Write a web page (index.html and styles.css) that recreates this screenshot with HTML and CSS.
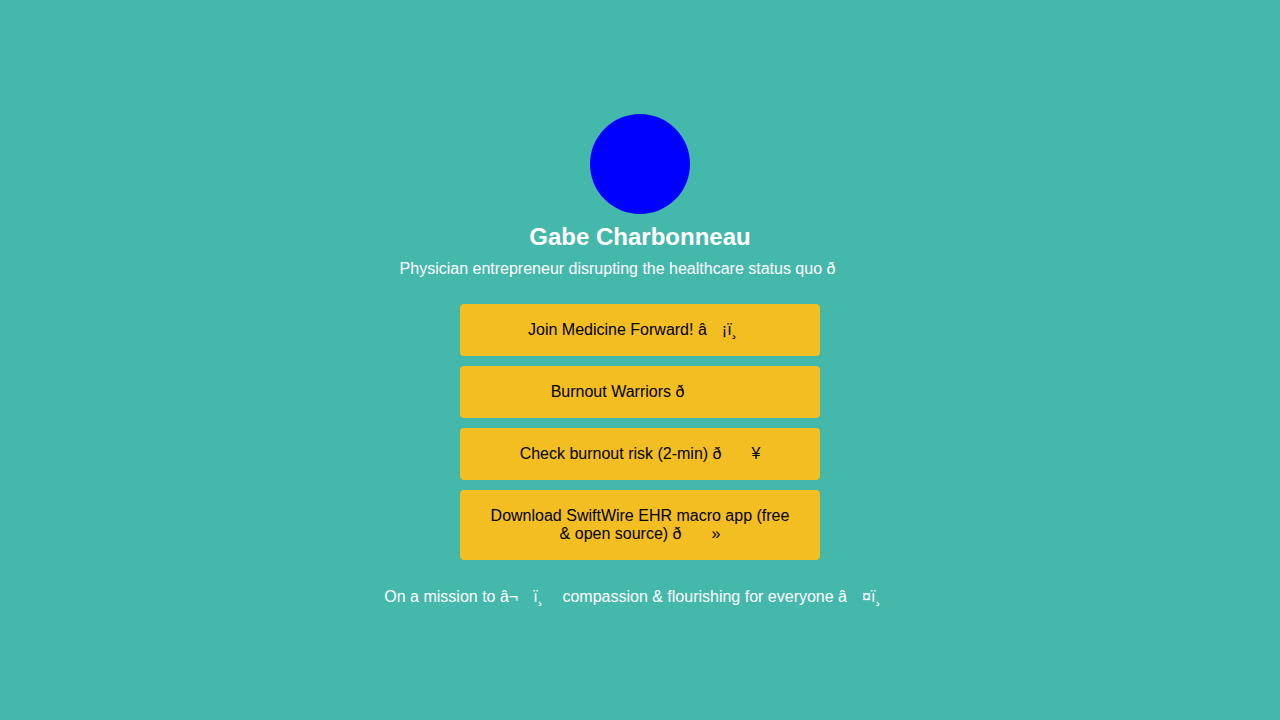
FILE: index.html
```html
<!DOCTYPE html>
<html lang="en">
<head>
<meta charset="utf-8">
<title>Gabe Charbonneau</title>
<link rel="stylesheet" href="styles.css">
</head>
<body>
<main class="page">
  <div class="avatar"></div>
  <h1 class="name">Gabe Charbonneau</h1>
  <p class="bio">Physician entrepreneur disrupting the healthcare status quo ð<span class="cc"></span><span class="cc"></span><span class="cc"></span></p>
  <nav class="links">
    <a class="link" href="#">Join Medicine Forward! â<span class="cc"></span>¡ï¸<span class="cc"></span></a>
    <a class="link" href="#">Burnout Warriors ð<span class="cc"></span><span class="cc"></span><span class="cc"></span></a>
    <a class="link" href="#">Check burnout risk (2-min) ð<span class="cc"></span><span class="cc"></span>¥</a>
    <a class="link" href="#">Download SwiftWire EHR macro app (free &amp; open source) ð<span class="cc"></span><span class="cc"></span>»</a>
  </nav>
  <p class="mission">On a mission to â¬<span class="cc"></span>ï¸<span class="cc"></span> compassion &amp; flourishing for everyone â<span class="cc"></span>¤ï¸<span class="cc"></span></p>
</main>
</body>
</html>
```
FILE: styles.css
```css
html, body {
  margin: 0;
  padding: 0;
}
body {
  background: #45b8ac;
  font-family: "Liberation Sans", Arial, Helvetica, sans-serif;
  color: #ffffff;
}
.page {
  min-height: 100vh;
  box-sizing: border-box;
  display: flex;
  flex-direction: column;
  align-items: center;
  justify-content: center;
  text-align: center;
}
.avatar {
  width: 100px;
  height: 100px;
  border-radius: 50%;
  background: #0000ff;
}
.name {
  margin: 9px 0 0;
  font-size: 24px;
  line-height: 28px;
  font-weight: bold;
}
.bio {
  margin: 9px 0 0;
  font-size: 16px;
  line-height: 18px;
}
.links {
  margin-top: 26px;
  display: flex;
  flex-direction: column;
  gap: 10px;
  width: 360px;
}
.link {
  display: block;
  background: #f3be22;
  color: #000000;
  text-decoration: none;
  border-radius: 4px;
  padding: 17px 30px;
  font-size: 16px;
  line-height: 18px;
}
.mission {
  margin: 28px 0 0;
  font-size: 16px;
  line-height: 18px;
}
.cc {
  display: inline-block;
  width: 15px;
}
```
